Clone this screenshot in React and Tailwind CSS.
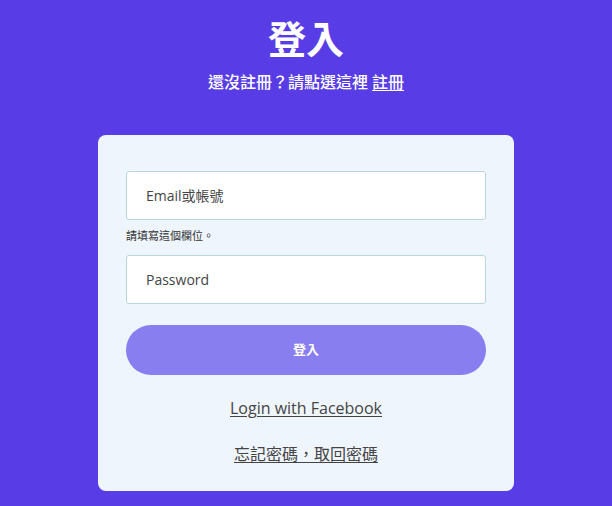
import { useState } from 'react'

const FONT = "font-['Open_Sans','Noto_Sans_CJK_TC',sans-serif]"

export default function App() {
  const [email, setEmail] = useState('')
  const [password, setPassword] = useState('')

  return (
    <div className={`${FONT} min-h-[506px] w-full bg-[#583de6] flex flex-col items-center`}>
      <h1 className="mt-[14px] text-[38px] leading-[48px] font-bold text-white">登入</h1>
      <p className="mt-[9px] text-[16px] leading-[22px] font-medium text-white">
        還沒註冊？請點選這裡 <a href="#" className="underline underline-offset-2">註冊</a>
      </p>

      <div className="mt-[42px] w-[416px] rounded-lg bg-[#eff5fc] px-[28px] pt-[36px] pb-[26px]">
        <input
          value={email}
          onChange={(e) => setEmail(e.target.value)}
          placeholder="Email或帳號"
          className="block w-full h-[49px] rounded-[3px] border border-[#b9d6da] bg-white px-[19px] text-[14px] text-[#444] placeholder:text-[#444] outline-none"
        />
        <p className="mt-[9px] text-[11px] leading-[14px] text-[#333]">請填寫這個欄位。</p>
        <input
          type="password"
          value={password}
          onChange={(e) => setPassword(e.target.value)}
          placeholder="Password"
          className="mt-[12px] block w-full h-[49px] rounded-[3px] border border-[#b9d6da] bg-white px-[19px] text-[14px] text-[#444] placeholder:text-[#444] outline-none"
        />
        <button className="mt-[21px] w-full h-[50px] rounded-full bg-[#897ef0] text-[13px] font-bold text-white">
          登入
        </button>

        <div className="mt-[22px] flex flex-col items-center gap-[24px] text-[16px] leading-[22px] text-[#444]">
          <a href="#" className="underline underline-offset-2">Login with Facebook</a>
          <a href="#" className="underline underline-offset-2">忘記密碼，取回密碼</a>
        </div>
      </div>
    </div>
  )
}
